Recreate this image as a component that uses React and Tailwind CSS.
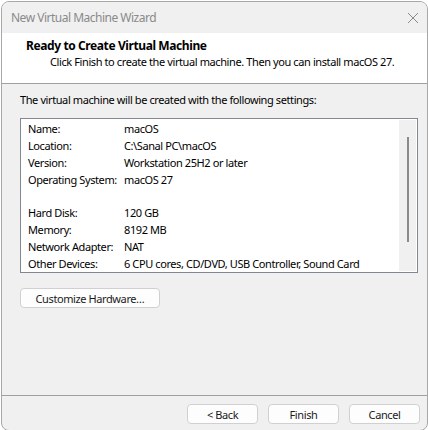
import React from 'react';

const settings = [
  ['Name:', 'macOS'],
  ['Location:', 'C:\\Sanal PC\\macOS'],
  ['Version:', 'Workstation 25H2 or later'],
  ['Operating System:', 'macOS 27'],
  null,
  ['Hard Disk:', '120 GB'],
  ['Memory:', '8192 MB'],
  ['Network Adapter:', 'NAT'],
  ['Other Devices:', '6 CPU cores, CD/DVD, USB Controller, Sound Card'],
];

function WinButton({ children, className = '' }) {
  return (
    <button
      className={`h-[20px] rounded-[4px] border border-[#d0d0d0] bg-[#fdfdfd] text-[11px] text-[#1a1a1a] leading-none ${className}`}
    >
      {children}
    </button>
  );
}

export default function App() {
  return (
    <div
      className="w-[428px] h-[430px] bg-white text-[11px] tracking-[-0.4px]"
      style={{ fontFamily: '"Noto Sans", "Open Sans", sans-serif' }}
    >
      <div className="w-[427px] h-[430px] ml-px mt-px flex flex-col border border-[#a8a8a8] rounded-[8px] overflow-hidden bg-[#f0f0f0]">
        {/* title bar */}
        <div className="h-[31px] shrink-0 flex items-center justify-between pl-[9px] pr-[8px] bg-[#f0f0f0]">
          <span className="text-[12px] tracking-[-0.5px] text-[#8a8a8a]">New Virtual Machine Wizard</span>
          <svg width="12" height="12" viewBox="0 0 12 12">
            <path d="M1 1 L11 11 M11 1 L1 11" stroke="#8a8a8a" strokeWidth="1" />
          </svg>
        </div>

        {/* header */}
        <div className="h-[51px] shrink-0 bg-white border-b border-[#a0a0a0] pl-[24px] pt-[4px]">
          <div className="text-[12px] font-bold text-black leading-[17px]">Ready to Create Virtual Machine</div>
          <div className="text-black leading-[16px] pl-[24px]">
            Click Finish to create the virtual machine. Then you can install macOS 27.
          </div>
        </div>

        {/* body */}
        <div className="flex-1 flex flex-col px-[18px] pt-[8px]">
          <div className="text-black leading-[16px]">
            The virtual machine will be created with the following settings:
          </div>
          <div className="mt-[10px] h-[155px] w-[398px] border border-[#828790] bg-white flex p-px">
            <div className="flex-1 pl-[6px] pt-[1px]">
              {settings.map((row, i) =>
                row ? (
                  <div key={i} className="flex h-[17px] items-center text-black whitespace-nowrap">
                    <span className="w-[96px] shrink-0">{row[0]}</span>
                    <span>{row[1]}</span>
                  </div>
                ) : (
                  <div key={i} className="h-[16px]" />
                )
              )}
            </div>
            <div className="w-[17px] bg-[#f0f0f0] flex justify-center pt-[17px]">
              <div className="w-[2px] h-[105px] bg-[#8a8a8a]" />
            </div>
          </div>
          <WinButton className="mt-[15px] w-[140px] self-start">Customize Hardware…</WinButton>
        </div>

        {/* footer */}
        <div className="h-[35px] shrink-0 border-t border-[#a0a0a0] flex justify-end items-start gap-[10px] pt-[8px] pr-[7px]">
          <WinButton className="w-[71px]">&lt; Back</WinButton>
          <WinButton className="w-[71px]">Finish</WinButton>
          <WinButton className="w-[71px]">Cancel</WinButton>
        </div>
      </div>
    </div>
  );
}
